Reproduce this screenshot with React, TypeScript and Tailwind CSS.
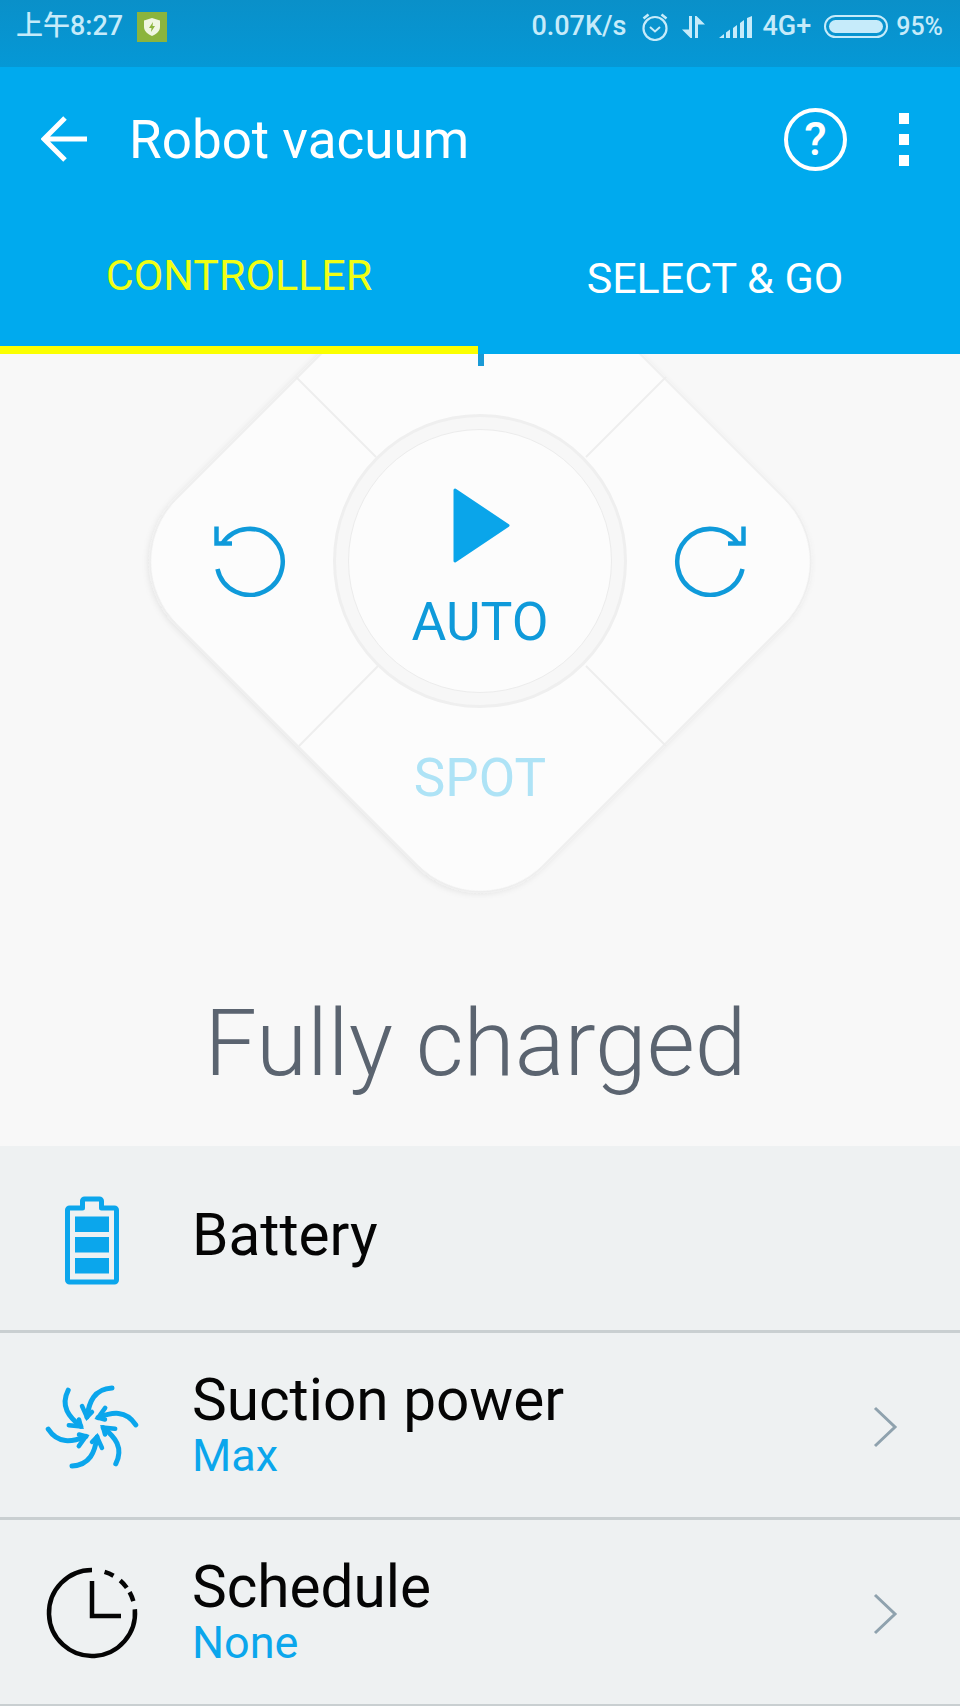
import React from "react";

const polar = (cx: number, cy: number, r: number, deg: number) => {
  const a = (deg * Math.PI) / 180;
  return [cx + r * Math.sin(a), cy - r * Math.cos(a)];
};
const arc = (cx: number, cy: number, r: number, from: number, to: number) => {
  const [x1, y1] = polar(cx, cy, r, from);
  const [x2, y2] = polar(cx, cy, r, to);
  return `M${x1} ${y1}A${r} ${r} 0 ${to - from > 180 ? 1 : 0} 1 ${x2} ${y2}`;
};

function AlarmIcon() {
  return (
    <svg width="28" height="28" viewBox="0 0 28 28" fill="none" stroke="#c6ebfa" strokeWidth="2.2">
      <circle cx="14" cy="15.500" r="11.500" />
      <path d="M9 14l5 4.500 5-4.500" strokeWidth="2" />
      <path d="M2.500 5.500L7.500 1.500M25.500 5.500L20.500 1.500" strokeWidth="2.600" />
    </svg>
  );
}

function DataIcon() {
  return (
    <svg width="25" height="22" viewBox="0 0 25 22" fill="#c6ebfa">
      <path d="M8 0h3v22H9.500L1 13.500h7zM14 0h1.500L24 8.500h-7V22h-3z" />
    </svg>
  );
}

function SignalIcon() {
  return (
    <svg width="33" height="22" viewBox="0 0 33 22" fill="#c6ebfa">
      <path d="M0 22l5-4v4zM7 16.500l4-3V22H7zM14 12l4-3v13h-4zM21 7l4-3v18h-4zM28 2l5-2v22h-5z" />
    </svg>
  );
}

function Dpad() {
  return (
    <svg className="absolute left-0 top-0" width="960" height="600" viewBox="0 0 960 600" fill="none">
      <defs>
        <filter id="padShadow" x="-10%" y="-10%" width="120%" height="120%">
          <feDropShadow dx="0" dy="2" stdDeviation="3" floodColor="#000000" floodOpacity="0.09" />
        </filter>
      </defs>
      <rect
        x="221"
        y="-52"
        width="519"
        height="519"
        rx="89"
        fill="#fcfcfc"
        stroke="#ededed"
        strokeWidth="1.500"
        filter="url(#padShadow)"
        transform="rotate(45 480.500 207.500)"
      />
      <path d="M296 23L376 103M666 23L586 103M299 392L378 312M666 392L586 312" stroke="#eeeeee" strokeWidth="2" />
    </svg>
  );
}

function RotateIcon({ flip }: { flip?: boolean }) {
  return (
    <svg
      width="72"
      height="72"
      viewBox="0 0 72 72"
      fill="none"
      stroke="#0f9ada"
      strokeWidth="4.500"
      className={flip ? "-scale-x-100" : ""}
    >
      <path d="M3.500 44A33 33 0 1 0 8 19" />
      <path d="M2.500 1.500V18.500H18" />
    </svg>
  );
}

function BatteryIcon() {
  return (
    <svg className="mt-[5px]" width="60" height="89" viewBox="0 0 60 89" fill="none">
      <path
        d="M7.500 12H20.500V5C20.500 4 21.500 3 22.500 3H37.500C38.500 3 39.500 4 39.500 5V12H52.500C53.500 12 54.500 13 54.500 14V84C54.500 85 53.500 86 52.500 86H7.500C6.500 86 5.500 85 5.500 84V14C5.500 13 6.500 12 7.500 12Z"
        stroke="#0ba6ec"
        strokeWidth="5"
        strokeLinejoin="round"
      />
      <rect x="13" y="20.500" width="34" height="15.500" fill="#0ba6ec" />
      <rect x="13" y="41" width="34" height="15.500" fill="#0ba6ec" />
      <rect x="13" y="62" width="34" height="15.500" fill="#0ba6ec" />
    </svg>
  );
}

function FanIcon() {
  const angles = [0, 60, 120, 180, 240, 300];
  return (
    <svg className="mt-[3px]" width="100" height="100" viewBox="-50 -50 100 100" fill="none" stroke="#0ba6ec" strokeWidth="5" strokeLinecap="round">
      {angles.map((a) => (
        <g key={a} transform={`rotate(${a})`}>
          <path d="M20 -39C2 -38 -3 -25 -5 -10" />
          <path d="M-10 -21L-5 -10L0 -15" strokeWidth="4.500" />
        </g>
      ))}
    </svg>
  );
}

function ClockIcon() {
  return (
    <svg className="mt-[1px]" width="100" height="100" viewBox="0 0 100 100" fill="none" stroke="#050505" strokeWidth="4.500">
      <path d={arc(50, 50, 43, 85, 360)} />
      <path d={arc(50, 50, 43, 17, 30)} />
      <path d={arc(50, 50, 43, 41, 54)} />
      <path d={arc(50, 50, 43, 61, 74)} />
      <path d="M50 18V53H79" />
    </svg>
  );
}

function Chevron() {
  return (
    <svg width="26" height="42" viewBox="0 0 26 42" fill="none" stroke="#8fa2ae" strokeWidth="3">
      <path d="M3 2L23 21L3 40" />
    </svg>
  );
}

function Row({
  icon,
  title,
  sub,
  chevron,
  textClass,
}: {
  icon: React.ReactNode;
  title: string;
  sub?: string;
  chevron?: boolean;
  textClass?: string;
}) {
  return (
    <div className="flex h-[187px] items-center border-b-[3px] border-[#c9cfd1]">
      <div className="ml-[42px] mr-[50px] flex w-[100px] justify-center">{icon}</div>
      <div className={`flex flex-1 flex-col ${textClass ?? ""}`}>
        <span className="text-[58.500px] leading-[60px] text-[#050505]">{title}</span>
        {sub && <span className="text-[45px] leading-[51px] text-[#0ba6ec]">{sub}</span>}
      </div>
      {chevron && (
        <div className="mr-[62px] mt-[4px]">
          <Chevron />
        </div>
      )}
    </div>
  );
}

export default function App() {
  return (
    <div className="flex h-[1706px] w-[960px] flex-col overflow-hidden bg-[#f8f8f8] font-['Roboto','Noto_Sans_CJK_SC',sans-serif]">
      {/* status bar */}
      <div className="flex h-[67px] shrink-0 items-center bg-gradient-to-b from-[#0a90c9] to-[#0598d6] pb-[14px] text-[27px] font-medium text-[#c6ebfa]">
        <span className="ml-[16px]">上午8:27</span>
        <div className="ml-[14px] flex h-[30px] w-[30px] items-center justify-center bg-[#8bb43d]">
          <svg width="16" height="18" viewBox="0 0 16 18">
            <path d="M8 0L16 2.500V9C16 13 12 16.500 8 18C4 16.500 0 13 0 9V2.500Z" fill="#f0f6e2" />
            <path d="M9 4L5 10H7.500L7 14L11 8H8.500Z" fill="#8bb43d" />
          </svg>
        </div>
        <div className="ml-auto mr-[17px] flex items-center">
          <span>0.07K/s</span>
          <div className="ml-[15px] flex">
            <AlarmIcon />
          </div>
          <div className="ml-[12px] flex">
            <DataIcon />
          </div>
          <div className="ml-[13px] flex">
            <SignalIcon />
          </div>
          <span className="ml-[10px]">4G+</span>
          <div className="ml-[13px] flex h-[23px] w-[64px] items-center rounded-full border-2 border-[#c6ebfa] p-[3px]">
            <div className="h-full w-full rounded-full bg-[#c6ebfa]" />
          </div>
          <span className="ml-[8px] text-[25px]">95%</span>
        </div>
      </div>

      {/* app bar */}
      <div className="shrink-0 bg-[#00aaee]">
        <div className="flex h-[144px] items-center text-white">
          <svg className="ml-[41px]" width="48" height="48" viewBox="0 0 48 48" fill="none" stroke="#ffffff" strokeWidth="5">
            <path d="M46 24H5M24 3L3 24L24 45" />
          </svg>
          <span className="ml-[40px] mt-[2px] text-[53px] leading-none">Robot vacuum</span>
          <div className="ml-auto mr-[51px] flex items-center">
            <div className="flex h-[63px] w-[63px] items-center justify-center rounded-full border-4 border-white text-[46px] font-medium leading-none">
              ?
            </div>
            <div className="ml-[52px] flex flex-col gap-[10px]">
              <div className="h-[11px] w-[10px] bg-white" />
              <div className="h-[11px] w-[10px] bg-white" />
              <div className="h-[11px] w-[10px] bg-white" />
            </div>
          </div>
        </div>
        <div className="flex h-[143px]">
          <div className="flex w-[478px] flex-col">
            <div className="flex flex-1 items-center justify-center pb-[7px] text-[43px] text-[#f0ff14]">CONTROLLER</div>
            <div className="h-[8px] bg-[#fbff00]" />
          </div>
          <div className="flex flex-1 items-center justify-center pb-[8px] pr-[8px] text-[43px] text-white">SELECT &amp; GO</div>
        </div>
      </div>

      {/* controller */}
      <div className="relative flex h-[792px] shrink-0 flex-col items-center overflow-hidden">
        <Dpad />
        <div className="absolute left-[478px] top-0 h-[12px] w-[6px] bg-[#1a9ad6]" />
        <div className="relative mt-[60px] flex items-center text-[#0f9ada]">
          <RotateIcon />
          <div className="mx-[47px] flex h-[294px] w-[294px] items-center justify-center rounded-full border-[3px] border-[#efefef] bg-[#f7f7f7]">
            <div className="flex h-[264px] w-[264px] flex-col items-center rounded-full border border-[#ececec] bg-[#fcfcfc]">
              <svg className="ml-[3px] mt-[58px]" width="57" height="75" viewBox="0 0 57 75">
                <path d="M2 2L55 37.500L2 73Z" fill="#0aa5ea" stroke="#0aa5ea" strokeWidth="3" strokeLinejoin="round" />
              </svg>
              <span className="mt-[32px] text-[53.500px] leading-[54px]">AUTO</span>
            </div>
          </div>
          <RotateIcon flip />
        </div>
        <span className="relative mt-[43px] text-[53px] leading-[54px] text-[#aee3f6]">SPOT</span>
        <span className="mt-[183px] pr-[9px] text-[93px] font-light leading-[112px] text-[#5b6470]">Fully charged</span>
      </div>

      {/* list */}
      <div className="shrink-0 bg-[#eef1f2]">
        <Row icon={<BatteryIcon />} title="Battery" textClass="pb-[6px]" />
        <Row icon={<FanIcon />} title="Suction power" sub="Max" chevron textClass="pt-[1px]" />
        <Row icon={<ClockIcon />} title="Schedule" sub="None" chevron textClass="pt-[1px]" />
      </div>
    </div>
  );
}
